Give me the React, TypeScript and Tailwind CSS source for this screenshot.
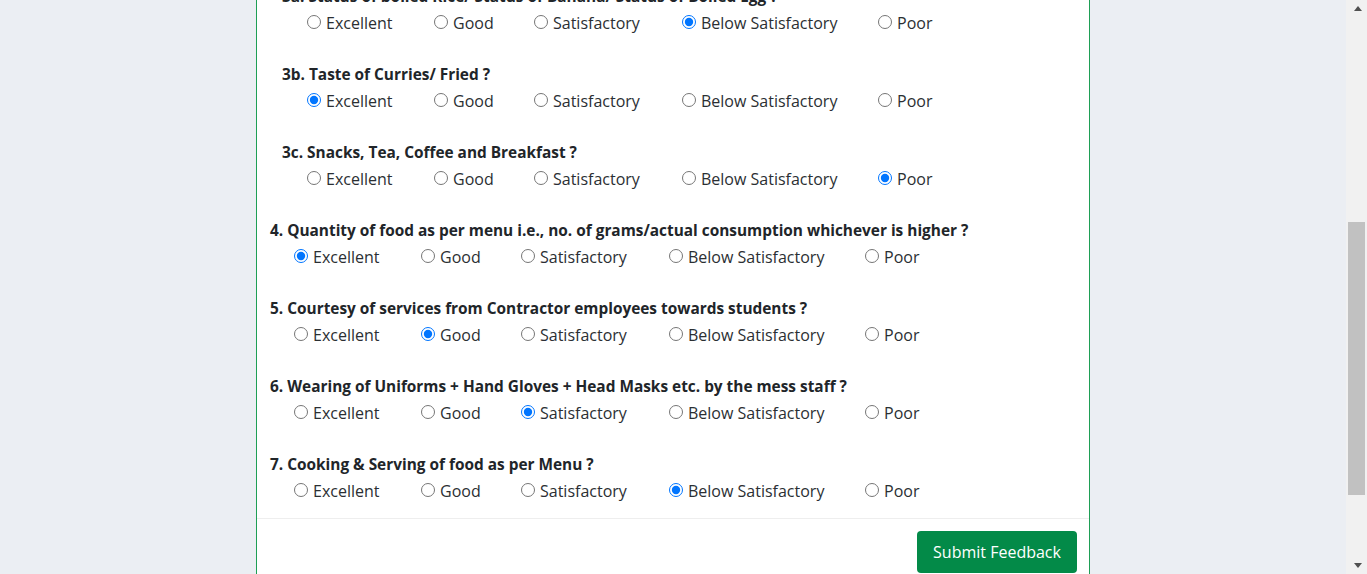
import { useLayoutEffect, useRef } from "react";

const OPTIONS = ["Excellent", "Good", "Satisfactory", "Below Satisfactory", "Poor"];

type Question = { id: string; label: string; picked: number; sub?: boolean };

const ABOVE: Question[] = [
  { id: "q1", label: "1. Cleanliness of dining hall and kitchen ?", picked: 1 },
  { id: "q2", label: "2. Quality of raw materials used for cooking ?", picked: 2 },
];

const VISIBLE: Question[] = [
  { id: "q3a", label: "3a. Status of boiled Rice/ Status of Banana/ Status of Boiled Egg ?", picked: 3, sub: true },
  { id: "q3b", label: "3b. Taste of Curries/ Fried ?", picked: 0, sub: true },
  { id: "q3c", label: "3c. Snacks, Tea, Coffee and Breakfast ?", picked: 4, sub: true },
  { id: "q4", label: "4. Quantity of food as per menu i.e., no. of grams/actual consumption whichever is higher ?", picked: 0 },
  { id: "q5", label: "5. Courtesy of services from Contractor employees towards students ?", picked: 1 },
  { id: "q6", label: "6. Wearing of Uniforms + Hand Gloves + Head Masks etc. by the mess staff ?", picked: 2 },
  { id: "q7", label: "7. Cooking & Serving of food as per Menu ?", picked: 3 },
];

function RadioRow({ q, rowRef }: { q: Question; rowRef?: React.Ref<HTMLDivElement> }) {
  return (
    <div
      ref={rowRef}
      className={`mt-[3px] grid h-6 grid-cols-[127px_100px_148px_196px_auto] ${q.sub ? "pl-[25px]" : "pl-[24px]"}`}
    >
      {OPTIONS.map((opt, i) => (
        <label key={opt} className="flex items-center gap-[5px] text-[16px] text-[#2b2f33]">
          <input
            type="radio"
            name={q.id}
            defaultChecked={i === q.picked}
            className="m-0 h-[14px] w-[14px] shrink-0 -translate-y-[1px]"
          />
          <span>{opt}</span>
        </label>
      ))}
    </div>
  );
}

function QuestionBlock({ q, rowRef }: { q: Question; rowRef?: React.Ref<HTMLDivElement> }) {
  return (
    <div className={`mb-[27px] ${q.sub ? "pl-[12px]" : ""}`}>
      <p className="h-6 pt-px text-[15.4px] font-bold leading-6 text-[#212529]">{q.label}</p>
      <RadioRow q={q} rowRef={rowRef} />
    </div>
  );
}

function FakeScrollbar() {
  return (
    <div className="flex w-[21px] shrink-0 flex-col bg-[#f1f1f1]">
      <div className="flex h-[17px] items-center justify-center pl-[2px]">
        <div className="h-0 w-0 border-x-[4.5px] border-b-[5px] border-x-transparent border-b-[#505050]" />
      </div>
      <div className="h-[205px]" />
      <div className="ml-[2px] mr-[2px] h-[273px] bg-[#c1c1c1]" />
      <div className="flex-1" />
      <div className="flex h-[17px] items-center justify-center pl-[2px]">
        <div className="h-0 w-0 border-x-[4.5px] border-t-[5px] border-x-transparent border-t-[#505050]" />
      </div>
    </div>
  );
}

export default function App() {
  const scroller = useRef<HTMLDivElement>(null);
  const anchor = useRef<HTMLDivElement>(null);

  useLayoutEffect(() => {
    const box = scroller.current;
    const el = anchor.current;
    if (!box || !el) return;
    box.scrollTop = el.getBoundingClientRect().top - box.getBoundingClientRect().top + box.scrollTop - 11;
  }, []);

  return (
    <div className="flex h-screen bg-[#ebeef3] font-['Open_Sans','Noto_Sans',sans-serif]">
      <div ref={scroller} className="flex-1 overflow-y-auto [scrollbar-width:none]">
        <header className="flex h-[56px] items-center bg-[#038a48] px-6 text-[18px] font-bold text-white">
          Hostel Mess Feedback
        </header>

        <div className="mx-auto w-[834px] pt-6 pb-[60px]">
          <div className="rounded border border-[#1e9f55] bg-white">
            <div className="border-b border-[#eeeeee] px-[13px] py-3 text-[18px] font-bold text-[#212529]">
              Mess Feedback Form
            </div>

            <div className="px-[13px] pt-4">
              {ABOVE.map((q) => (
                <QuestionBlock key={q.id} q={q} />
              ))}
              <p className="mb-[3px] h-6 text-[15.4px] font-bold leading-6 text-[#212529]">3. Quality of food ?</p>
              {VISIBLE.map((q, i) => (
                <div key={q.id} className={i === VISIBLE.length - 1 ? "-mb-[12px]" : ""}>
                  <QuestionBlock q={q} rowRef={i === 0 ? anchor : undefined} />
                </div>
              ))}
            </div>

            <div className="flex justify-end border-t border-[#eeeeee] p-[12px]">
              <button type="button" className="h-[42px] w-[160px] rounded bg-[#038a48] text-[16px] text-white">
                Submit Feedback
              </button>
            </div>
          </div>
        </div>

        <footer className="flex h-[120px] items-center justify-center text-[14px] text-[#6c757d]">
          © Hostel Management
        </footer>
      </div>
      <FakeScrollbar />
    </div>
  );
}
